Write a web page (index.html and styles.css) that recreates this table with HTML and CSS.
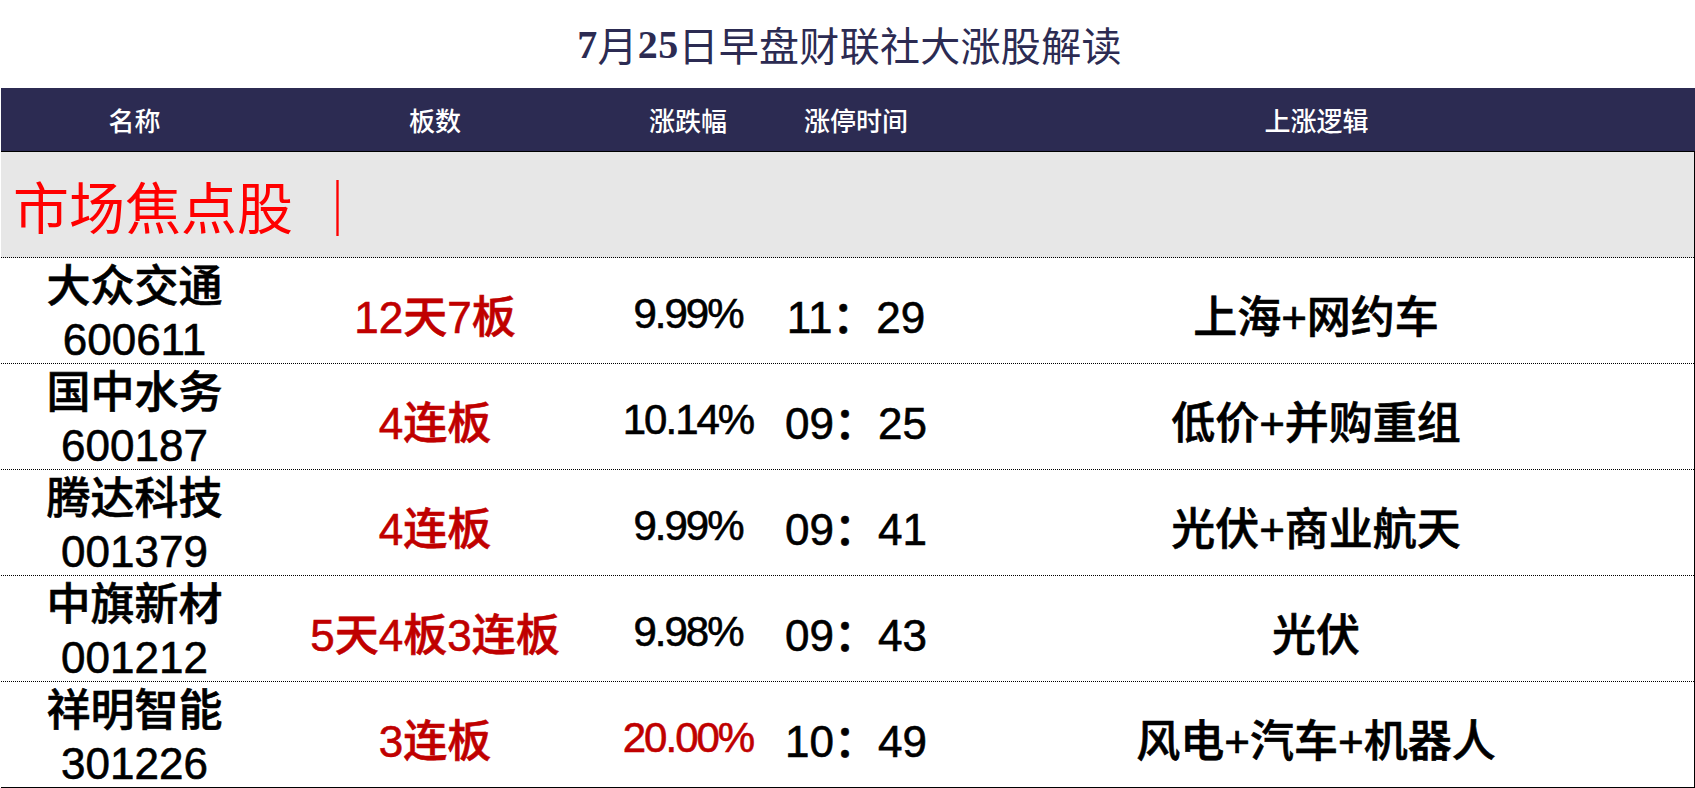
FILE: index.html
```html
<!DOCTYPE html>
<html lang="zh-CN">
<head>
<meta charset="utf-8">
<title>7月25日早盘财联社大涨股解读</title>
<link rel="stylesheet" href="styles.css">
</head>
<body>
<div class="page">
  <h1 class="title"><span class="num">7</span>月<span class="num">25</span>日早盘财联社大涨股解读</h1>
  <div class="table">
    <div class="head">
      <div class="hcell">名称</div>
      <div class="hcell">板数</div>
      <div class="hcell">涨跌幅</div>
      <div class="hcell">涨停时间</div>
      <div class="hcell">上涨逻辑</div>
    </div>
    <div class="body">
      <div class="section">市场焦点股 <span class="bar">｜</span></div>
      <div class="row">
        <div class="cell name"><span>大众交通</span><span>600611</span></div>
        <div class="cell red">12天7板</div>
        <div class="cell pct">9.99%</div>
        <div class="cell">11：29</div>
        <div class="cell">上海+网约车</div>
      </div>
      <div class="row">
        <div class="cell name"><span>国中水务</span><span>600187</span></div>
        <div class="cell red">4连板</div>
        <div class="cell pct">10.14%</div>
        <div class="cell">09：25</div>
        <div class="cell">低价+并购重组</div>
      </div>
      <div class="row">
        <div class="cell name"><span>腾达科技</span><span>001379</span></div>
        <div class="cell red">4连板</div>
        <div class="cell pct">9.99%</div>
        <div class="cell">09：41</div>
        <div class="cell">光伏+商业航天</div>
      </div>
      <div class="row">
        <div class="cell name"><span>中旗新材</span><span>001212</span></div>
        <div class="cell red">5天4板3连板</div>
        <div class="cell pct">9.98%</div>
        <div class="cell">09：43</div>
        <div class="cell">光伏</div>
      </div>
      <div class="row last">
        <div class="cell name"><span>祥明智能</span><span>301226</span></div>
        <div class="cell red">3连板</div>
        <div class="cell pct red">20.00%</div>
        <div class="cell">10：49</div>
        <div class="cell">风电+汽车+机器人</div>
      </div>
    </div>
  </div>
</div>
</body>
</html>
```
FILE: styles.css
```css
html, body {
  margin: 0;
  padding: 0;
  background: #ffffff;
}
.page {
  width: 1695px;
  height: 788px;
  overflow: hidden;
  font-family: "Liberation Sans", "Noto Sans CJK SC", sans-serif;
}
.title {
  margin: 0;
  height: 88px;
  display: flex;
  align-items: center;
  justify-content: center;
  padding-left: 4px;
  box-sizing: border-box;
  font-family: "Liberation Serif", "Noto Sans CJK SC", serif;
  font-size: 40px;
  font-weight: 400;
  letter-spacing: 0.3px;
  color: #2c2b52;
}
.title .num {
  font-weight: 700;
}
.table {
  padding-left: 1px;
}
.head {
  display: grid;
  grid-template-columns: 267px 334px 172px 164px 1fr;
  height: 63px;
  background: #2c2b52;
  border-bottom: 1px solid #000;
}
.hcell {
  display: flex;
  align-items: center;
  justify-content: center;
  color: #ffffff;
  font-family: "Noto Sans CJK SC", sans-serif;
  font-size: 26px;
  font-weight: 500;
}
.body {
  border-right: 1px solid #000;
}
.section {
  height: 105px;
  background: #e7e7e7;
  border-bottom: 1px dotted #000;
  display: flex;
  align-items: center;
  padding-left: 12px;
  color: #ff0000;
  font-family: "Noto Sans CJK SC", sans-serif;
  font-size: 56px;
  font-weight: 400;
  white-space: pre;
}
.section .bar {
  margin-left: 4px;
}
.row {
  display: grid;
  grid-template-columns: 267px 334px 172px 164px 1fr;
  height: 105px;
  border-bottom: 1px dotted #000;
}
.row.last {
  border-bottom: 1px solid #000;
}
.cell {
  display: flex;
  align-items: center;
  justify-content: center;
  padding-top: 3px;
  box-sizing: border-box;
  font-size: 44px;
  font-weight: 500;
  color: #000;
  white-space: nowrap;
  -webkit-text-stroke: 0.6px currentColor;
}
.cell.name {
  flex-direction: column;
  padding-top: 2px;
  line-height: 53px;
}
.cell.pct {
  font-size: 42px;
  letter-spacing: -2px;
}
.cell.red {
  color: #c00000;
}
```
